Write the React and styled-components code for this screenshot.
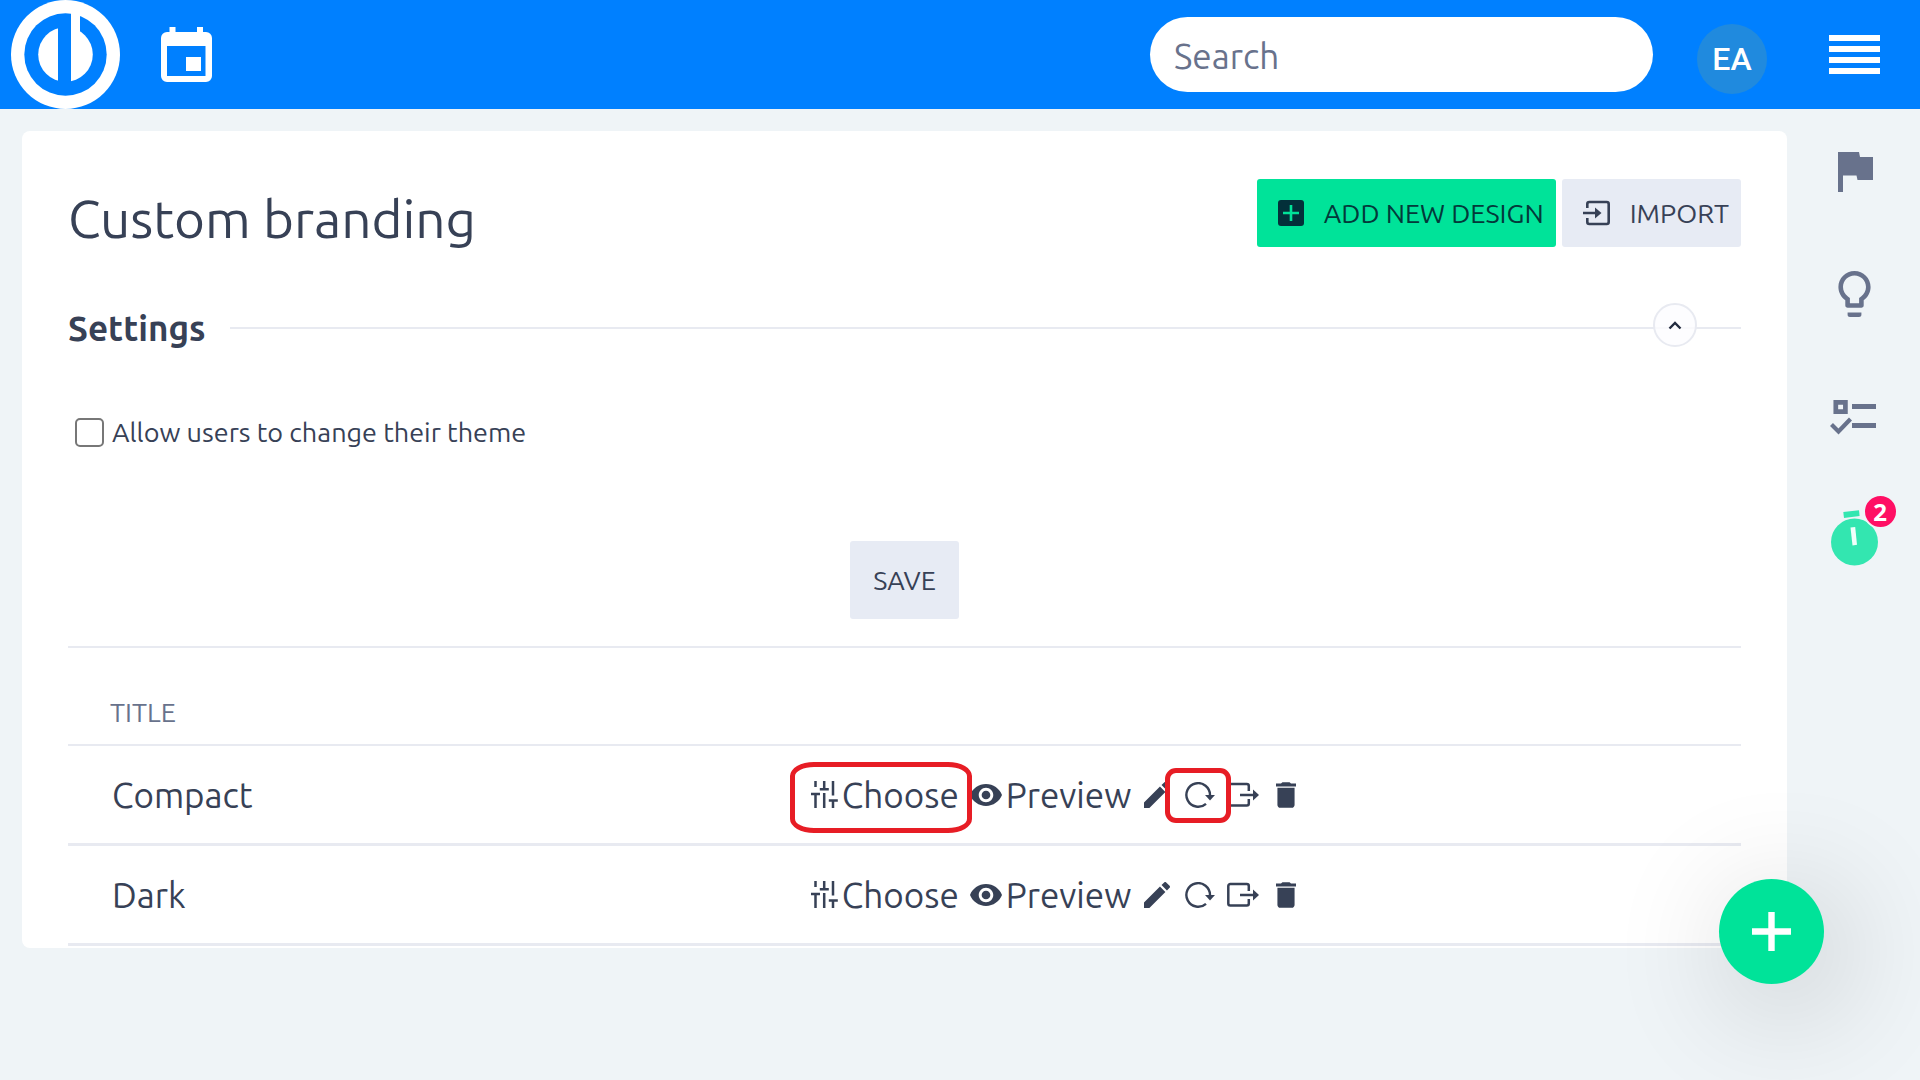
import React from 'react'
import styled, {createGlobalStyle, css} from 'styled-components'

const colors = {
  blue: '#0080ff',
  green: '#00e399',
  page: '#eff4f7',
  text: '#374156',
  muted: '#68728c',
  light: '#e7ebf4',
  line: '#e8eaf1',
  red: '#e71d25',
  pink: '#ff0f64',
}

const GlobalStyle = createGlobalStyle`
  *, *::before, *::after {
    box-sizing: border-box;
  }

  body {
    margin: 0;
    background-color: ${colors.page};
    color: ${colors.text};
    font-family: Ubuntu, "Noto Sans", "Open Sans", sans-serif;
  }

  button, input {
    font-family: inherit;
    color: inherit;
  }

  svg {
    display: block;
    flex-shrink: 0;
  }
`

const resetButton = css`
  display: flex;
  align-items: center;
  justify-content: center;
  padding: 0;
  border: 0;
  background: none;
  cursor: pointer;
`

const HeaderStl = styled.header`
  display: flex;
  align-items: center;
  height: 109px;
  padding: 0 40px 0 11px;
  background-color: ${colors.blue};
`

const LogoStl = styled.a`
  margin-right: 41px;
`

const IconBtnStl = styled.button`
  ${resetButton}
`

const SearchStl = styled.input`
  width: 503px;
  height: 75px;
  margin-left: auto;
  padding: 2px 24px 0;
  border: 0;
  border-radius: 38px;
  background-color: #fff;
  font-size: 35px;

  &::placeholder {
    color: ${colors.muted};
    opacity: 1;
  }
`

const AvatarStl = styled.a`
  display: flex;
  align-items: center;
  justify-content: center;
  width: 70px;
  height: 70px;
  margin: 8px 62px 0 44px;
  border-radius: 50%;
  background-color: #208ade;
  color: #fff;
  font-family: Roboto, sans-serif;
  font-size: 32px;
  font-weight: 500;
  text-decoration: none;
`

const LayoutStl = styled.div`
  display: flex;
  align-items: flex-start;
`

const CardStl = styled.main`
  flex: 1;
  min-width: 0;
  margin: 22px 0 0 22px;
  padding: 48px 46px 2px;
  border-radius: 8px;
  background-color: #fff;
`

const CardHeadStl = styled.div`
  display: flex;
  align-items: flex-start;
  justify-content: space-between;
`

const TitleStl = styled.h1`
  margin: 0;
  font-size: 53px;
  font-weight: 400;
  line-height: 80px;
`

const BtnGroupStl = styled.div`
  display: flex;
  gap: 6px;
`

const BtnStl = styled.button`
  ${resetButton}
  gap: 20px;
  height: ${({$tall}) => $tall ? '78px' : '68px'};
  padding: ${({$tall}) => $tall ? '0 23px' : '0 12px 0 21px'};
  border-radius: 3px;
  background-color: ${({$primary}) => $primary ? colors.green : colors.light};
  color: ${({$primary}) => $primary ? '#03393a' : colors.text};
  font-size: 27px;
  text-transform: uppercase;
`

const LegendStl = styled.div`
  display: flex;
  align-items: center;
  margin-top: 47px;
`

const SubtitleStl = styled.h2`
  margin: 0;
  font-size: 35px;
  line-height: 44px;
`

const RuleStl = styled.div`
  position: relative;
  flex: 1;
  height: 2px;
  margin-left: 24px;
  background-color: ${colors.line};
`

const CollapseBtnStl = styled.button`
  ${resetButton}
  position: absolute;
  top: -24px;
  right: 44px;
  width: 44px;
  height: 44px;
  border: 2px solid ${colors.line};
  border-radius: 50%;
  background-color: rgba(252, 253, 255, .8);
`

const CheckLabelStl = styled.label`
  display: flex;
  align-items: center;
  gap: 8px;
  margin-top: 64px;
  padding-left: 7px;
  font-size: 27px;
  line-height: 36px;
`

const CheckboxStl = styled.input`
  appearance: none;
  width: 29px;
  height: 29px;
  margin: 0;
  border: 2px solid #777;
  border-radius: 5px;
  background-color: #fff;

  &:checked {
    background-color: ${colors.green};
  }
`

const SaveRowStl = styled.div`
  display: flex;
  justify-content: center;
  margin-top: 91px;
  padding-bottom: 27px;
  border-bottom: 2px solid ${colors.line};
`

const TableStl = styled.table`
  width: 100%;
  border-collapse: separate;
  border-spacing: 0;
  table-layout: fixed;
`

const HeadCellStl = styled.th`
  width: ${({$width}) => $width};
  padding: 46px 42px 14px;
  border-bottom: 2px solid ${colors.line};
  color: ${colors.muted};
  font-size: 27px;
  font-weight: 400;
  line-height: 36px;
  text-align: left;
`

const CellStl = styled.td`
  height: 100px;
  padding: ${({$name}) => $name ? '0 44px' : '0'};
  border-bottom: 3px solid ${colors.line};
  font-size: 35px;
  line-height: 44px;
`

const ActionsStl = styled.div`
  display: grid;
  grid-template-columns: 159px 174px 41px 42px 49px 20px;
  align-items: center;
`

const ActionStl = styled.a`
  position: relative;
  display: flex;
  align-items: center;
  gap: 4px;
  color: inherit;
  text-decoration: none;
`

const MarkStl = styled.span`
  position: absolute;
  border: 5px solid ${colors.red};
  pointer-events: none;
  z-index: 1;
`

const WideMarkStl = styled(MarkStl)`
  inset: -11px -2px -16px -21px;
  border-radius: 24px / 14px;
`

const SmallMarkStl = styled(MarkStl)`
  inset: -14px -4px -15px -20px;
  border-radius: 11px;
`

const RailStl = styled.nav`
  display: flex;
  flex-direction: column;
  align-items: center;
  gap: 66px;
  width: 133px;
  padding: 35px 0 0 2px;
  color: ${colors.muted};
`

const RailBtnStl = styled.button`
  ${resetButton}
  position: relative;
  width: 56px;
  height: 56px;
`

const BadgeStl = styled.span`
  position: absolute;
  top: -16px;
  right: -15px;
  width: 35px;
  height: 35px;
  border: 2px solid ${colors.page};
  border-radius: 50%;
  background-color: ${colors.pink};
  color: #fff;
  font-family: "Noto Sans", sans-serif;
  font-size: 24px;
  font-weight: 700;
  line-height: 31px;
  text-align: center;
`

const FabStl = styled.button`
  ${resetButton}
  position: fixed;
  right: 96px;
  bottom: 96px;
  width: 105px;
  height: 105px;
  border-radius: 50%;
  background-color: ${colors.green};
  box-shadow: 14px 20px 120px 10px rgba(0, 0, 0, .16);
`

const Logo = () => (
  <svg width="109" height="109" viewBox="0 0 109 109">
    <circle cx="54.5" cy="54.5" r="54.5" fill="#fff" />
    <circle cx="54.5" cy="54.5" r="41.2" fill={colors.blue} />
    <circle cx="54.5" cy="54.5" r="27.3" fill="#fff" />
    <path fill={colors.blue} d="M47 16h13v70H47z" />
    <path fill="#fff" d="M60 10h9v32h-9z" />
  </svg>
)

const CalendarIcon = () => (
  <svg width="51" height="55" viewBox="0 0 51 55">
    <path
      fill="#fff"
      fillRule="evenodd"
      d="M8.500 0h6v5h21.500V0h6v5H45a6 6 0 0 1 6 6v38a6 6 0 0 1-6 6H6a6 6 0 0 1-6-6V11a6 6 0 0 1 6-6h2.500zM6 19v30h38.500V19zM25 30h15v14H25z"
    />
  </svg>
)

const MenuIcon = () => (
  <svg width="51" height="39" viewBox="0 0 51 39">
    <path fill="#fff" d="M0 0h51v6H0zM0 11h51v6H0zM0 22h51v6H0zM0 33h51v6H0z" />
  </svg>
)

const AddBoxIcon = () => (
  <svg width="26" height="26" viewBox="0 0 26 26">
    <rect width="26" height="26" rx="3" fill="#03303a" />
    <path d="M13 5v16M5 13h16" stroke={colors.green} strokeWidth="2.600" />
  </svg>
)

const ImportIcon = () => (
  <svg width="27" height="26" viewBox="0 0 27 26" fill="none" stroke="currentColor" strokeWidth="2.600">
    <path d="M4.300 8V4a2 2 0 0 1 2-2h17.400a2 2 0 0 1 2 2v18a2 2 0 0 1-2 2H6.300a2 2 0 0 1-2-2v-4M0 13h13" />
    <path d="M12 7.500l6.500 5.500-6.500 5.500z" fill="currentColor" stroke="none" />
  </svg>
)

const ChevronIcon = () => (
  <svg width="14" height="9" viewBox="0 0 14 9">
    <path d="M1.500 7.500L7 2l5.500 5.500" fill="none" stroke="#222b3f" strokeWidth="2.400" />
  </svg>
)

const TuneIcon = () => (
  <svg width="27" height="27" viewBox="0 0 27 27">
    <path
      fill="none"
      stroke="currentColor"
      strokeWidth="2.500"
      d="M4.500 0v6M0 13h9M4.500 13v14M13.200 0v8M8.800 8.300h9M13.200 12v15M22 0v14.500M17.800 19.500h9M22 19.500V27"
    />
  </svg>
)

const EyeIcon = () => (
  <svg width="32" height="22" viewBox="1 4.5 22 15" fill="currentColor">
    <path d="M12 4.500C7 4.500 2.730 7.610 1 12c1.730 4.390 6 7.500 11 7.500s9.270-3.110 11-7.500c-1.730-4.390-6-7.500-11-7.500zM12 17c-2.760 0-5-2.240-5-5s2.240-5 5-5 5 2.240 5 5-2.240 5-5 5zm0-8c-1.660 0-3 1.340-3 3s1.340 3 3 3 3-1.340 3-3-1.340-3-3-3z" />
  </svg>
)

const EditIcon = () => (
  <svg width="26" height="26" viewBox="3 3 18 18" fill="currentColor">
    <path d="M3 17.250V21h3.750L17.810 9.940l-3.750-3.750L3 17.250zM20.710 7.040c.39-.39.39-1.020 0-1.410l-2.340-2.340a1 1 0 0 0-1.410 0l-1.830 1.830 3.750 3.750 1.830-1.830z" />
  </svg>
)

const RefreshIcon = () => (
  <svg width="30" height="26" viewBox="0 0 30 26">
    <path d="M21 21.800A11.800 11.800 0 1 1 25 13v1.500" fill="none" stroke="currentColor" strokeWidth="2.400" />
    <path d="M20 13h10l-5 5.500z" fill="currentColor" />
  </svg>
)

const ExportIcon = () => (
  <svg width="32" height="26" viewBox="0 0 32 26" fill="none" stroke="currentColor" strokeWidth="2.500">
    <path d="M21.800 9V4a2 2 0 0 0-2-2H3.300a2 2 0 0 0-2 2v17.500a2 2 0 0 0 2 2h16.500a2 2 0 0 0 2-2v-4.500M13 13h14" />
    <path d="M26 7.500l6 5.500-6 5.500z" fill="currentColor" stroke="none" />
  </svg>
)

const TrashIcon = () => (
  <svg width="20" height="26" viewBox="5 3 14 18" fill="currentColor">
    <path d="M6 19c0 1.100.9 2 2 2h8c1.100 0 2-.9 2-2V7H6v12zM19 4h-3.500l-1-1h-5l-1 1H5v2h14V4z" />
  </svg>
)

const FlagIcon = () => (
  <svg width="37" height="40" viewBox="-2 0 37 40" fill="currentColor">
    <path d="M0 0h21l1 5h13v23H19.500l-1-4.500H5V40H0z" />
  </svg>
)

const BulbIcon = () => (
  <svg width="33" height="46" viewBox="5 2 14 20" fill="currentColor">
    <path d="M9 21c0 .55.45 1 1 1h4c.55 0 1-.45 1-1v-1H9v1zm3-19C8.140 2 5 5.140 5 9c0 2.380 1.190 4.470 3 5.740V17c0 .55.45 1 1 1h6c.55 0 1-.45 1-1v-2.260c1.810-1.270 3-3.360 3-5.740 0-3.870-3.140-7-7-7zm2.850 11.100l-.85.6V16h-4v-2.300l-.85-.6C7.800 12.160 7 10.630 7 9c0-2.760 2.240-5 5-5s5 2.240 5 5c0 1.630-.8 3.160-2.150 4.100z" />
  </svg>
)

const TasksIcon = () => (
  <svg width="50" height="37" viewBox="0 -2 50 37" fill="none" stroke="currentColor">
    <path d="M5.800 2.400h9.600v9.300H5.800z" strokeWidth="4.700" />
    <path d="M22 6.500h24M22 25.500h24" strokeWidth="5" />
    <path d="M1.500 24.500l7 7 12-12.500" strokeWidth="4.200" />
  </svg>
)

const TimerIcon = () => (
  <svg width="47" height="56" viewBox="0 0 47 56">
    <path d="M12.300 2L28 .3l.6 5.700L13 8z" fill="#33e6b0" />
    <circle cx="23.500" cy="32" r="23.500" fill="#33e6b0" />
    <path d="M19.500 17.500l4.700-.5L26 34.700l-4.500.7z" fill="#f0fffa" />
  </svg>
)

const PlusIcon = () => (
  <svg width="39" height="39" viewBox="0 0 39 39">
    <path d="M19.500 0v39M0 19.500h39" stroke="#fff" strokeWidth="6.400" />
  </svg>
)

const Header = () => (
  <HeaderStl>
    <LogoStl href="#home" aria-label="Home"><Logo /></LogoStl>
    <IconBtnStl aria-label="Calendar"><CalendarIcon /></IconBtnStl>
    <SearchStl type="search" placeholder="Search" aria-label="Search" />
    <AvatarStl href="#profile">EA</AvatarStl>
    <IconBtnStl aria-label="Menu"><MenuIcon /></IconBtnStl>
  </HeaderStl>
)

const DesignRow = ({name, marked}) => (
  <tr>
    <CellStl $name>{name}</CellStl>
    <CellStl>
      <ActionsStl>
        <ActionStl href="#choose">
          <TuneIcon />Choose
          {marked && <WideMarkStl />}
        </ActionStl>
        <ActionStl href="#preview"><EyeIcon />Preview</ActionStl>
        <ActionStl href="#edit" aria-label="Edit"><EditIcon /></ActionStl>
        <ActionStl href="#reset" aria-label="Reset">
          <RefreshIcon />
          {marked && <SmallMarkStl />}
        </ActionStl>
        <ActionStl href="#export" aria-label="Export"><ExportIcon /></ActionStl>
        <ActionStl href="#delete" aria-label="Delete"><TrashIcon /></ActionStl>
      </ActionsStl>
    </CellStl>
  </tr>
)

const Rail = () => (
  <RailStl>
    <RailBtnStl aria-label="Flags"><FlagIcon /></RailBtnStl>
    <RailBtnStl aria-label="Ideas"><BulbIcon /></RailBtnStl>
    <RailBtnStl aria-label="Tasks"><TasksIcon /></RailBtnStl>
    <RailBtnStl aria-label="Timers">
      <TimerIcon />
      <BadgeStl>2</BadgeStl>
    </RailBtnStl>
  </RailStl>
)

const App = () => {
  return (
    <>
      <GlobalStyle />
      <Header />
      <LayoutStl>
        <CardStl>
          <CardHeadStl>
            <TitleStl>Custom branding</TitleStl>
            <BtnGroupStl>
              <BtnStl $primary><AddBoxIcon />Add new design</BtnStl>
              <BtnStl><ImportIcon />Import</BtnStl>
            </BtnGroupStl>
          </CardHeadStl>
          <LegendStl>
            <SubtitleStl>Settings</SubtitleStl>
            <RuleStl>
              <CollapseBtnStl aria-label="Collapse settings"><ChevronIcon /></CollapseBtnStl>
            </RuleStl>
          </LegendStl>
          <CheckLabelStl>
            <CheckboxStl type="checkbox" />
            Allow users to change their theme
          </CheckLabelStl>
          <SaveRowStl>
            <BtnStl $tall>Save</BtnStl>
          </SaveRowStl>
          <TableStl>
            <thead>
              <tr>
                <HeadCellStl $width="44.4%">TITLE</HeadCellStl>
                <HeadCellStl />
              </tr>
            </thead>
            <tbody>
              <DesignRow name="Compact" marked />
              <DesignRow name="Dark" />
            </tbody>
          </TableStl>
        </CardStl>
        <Rail />
      </LayoutStl>
      <FabStl aria-label="Add"><PlusIcon /></FabStl>
    </>
  )
}

export default App
